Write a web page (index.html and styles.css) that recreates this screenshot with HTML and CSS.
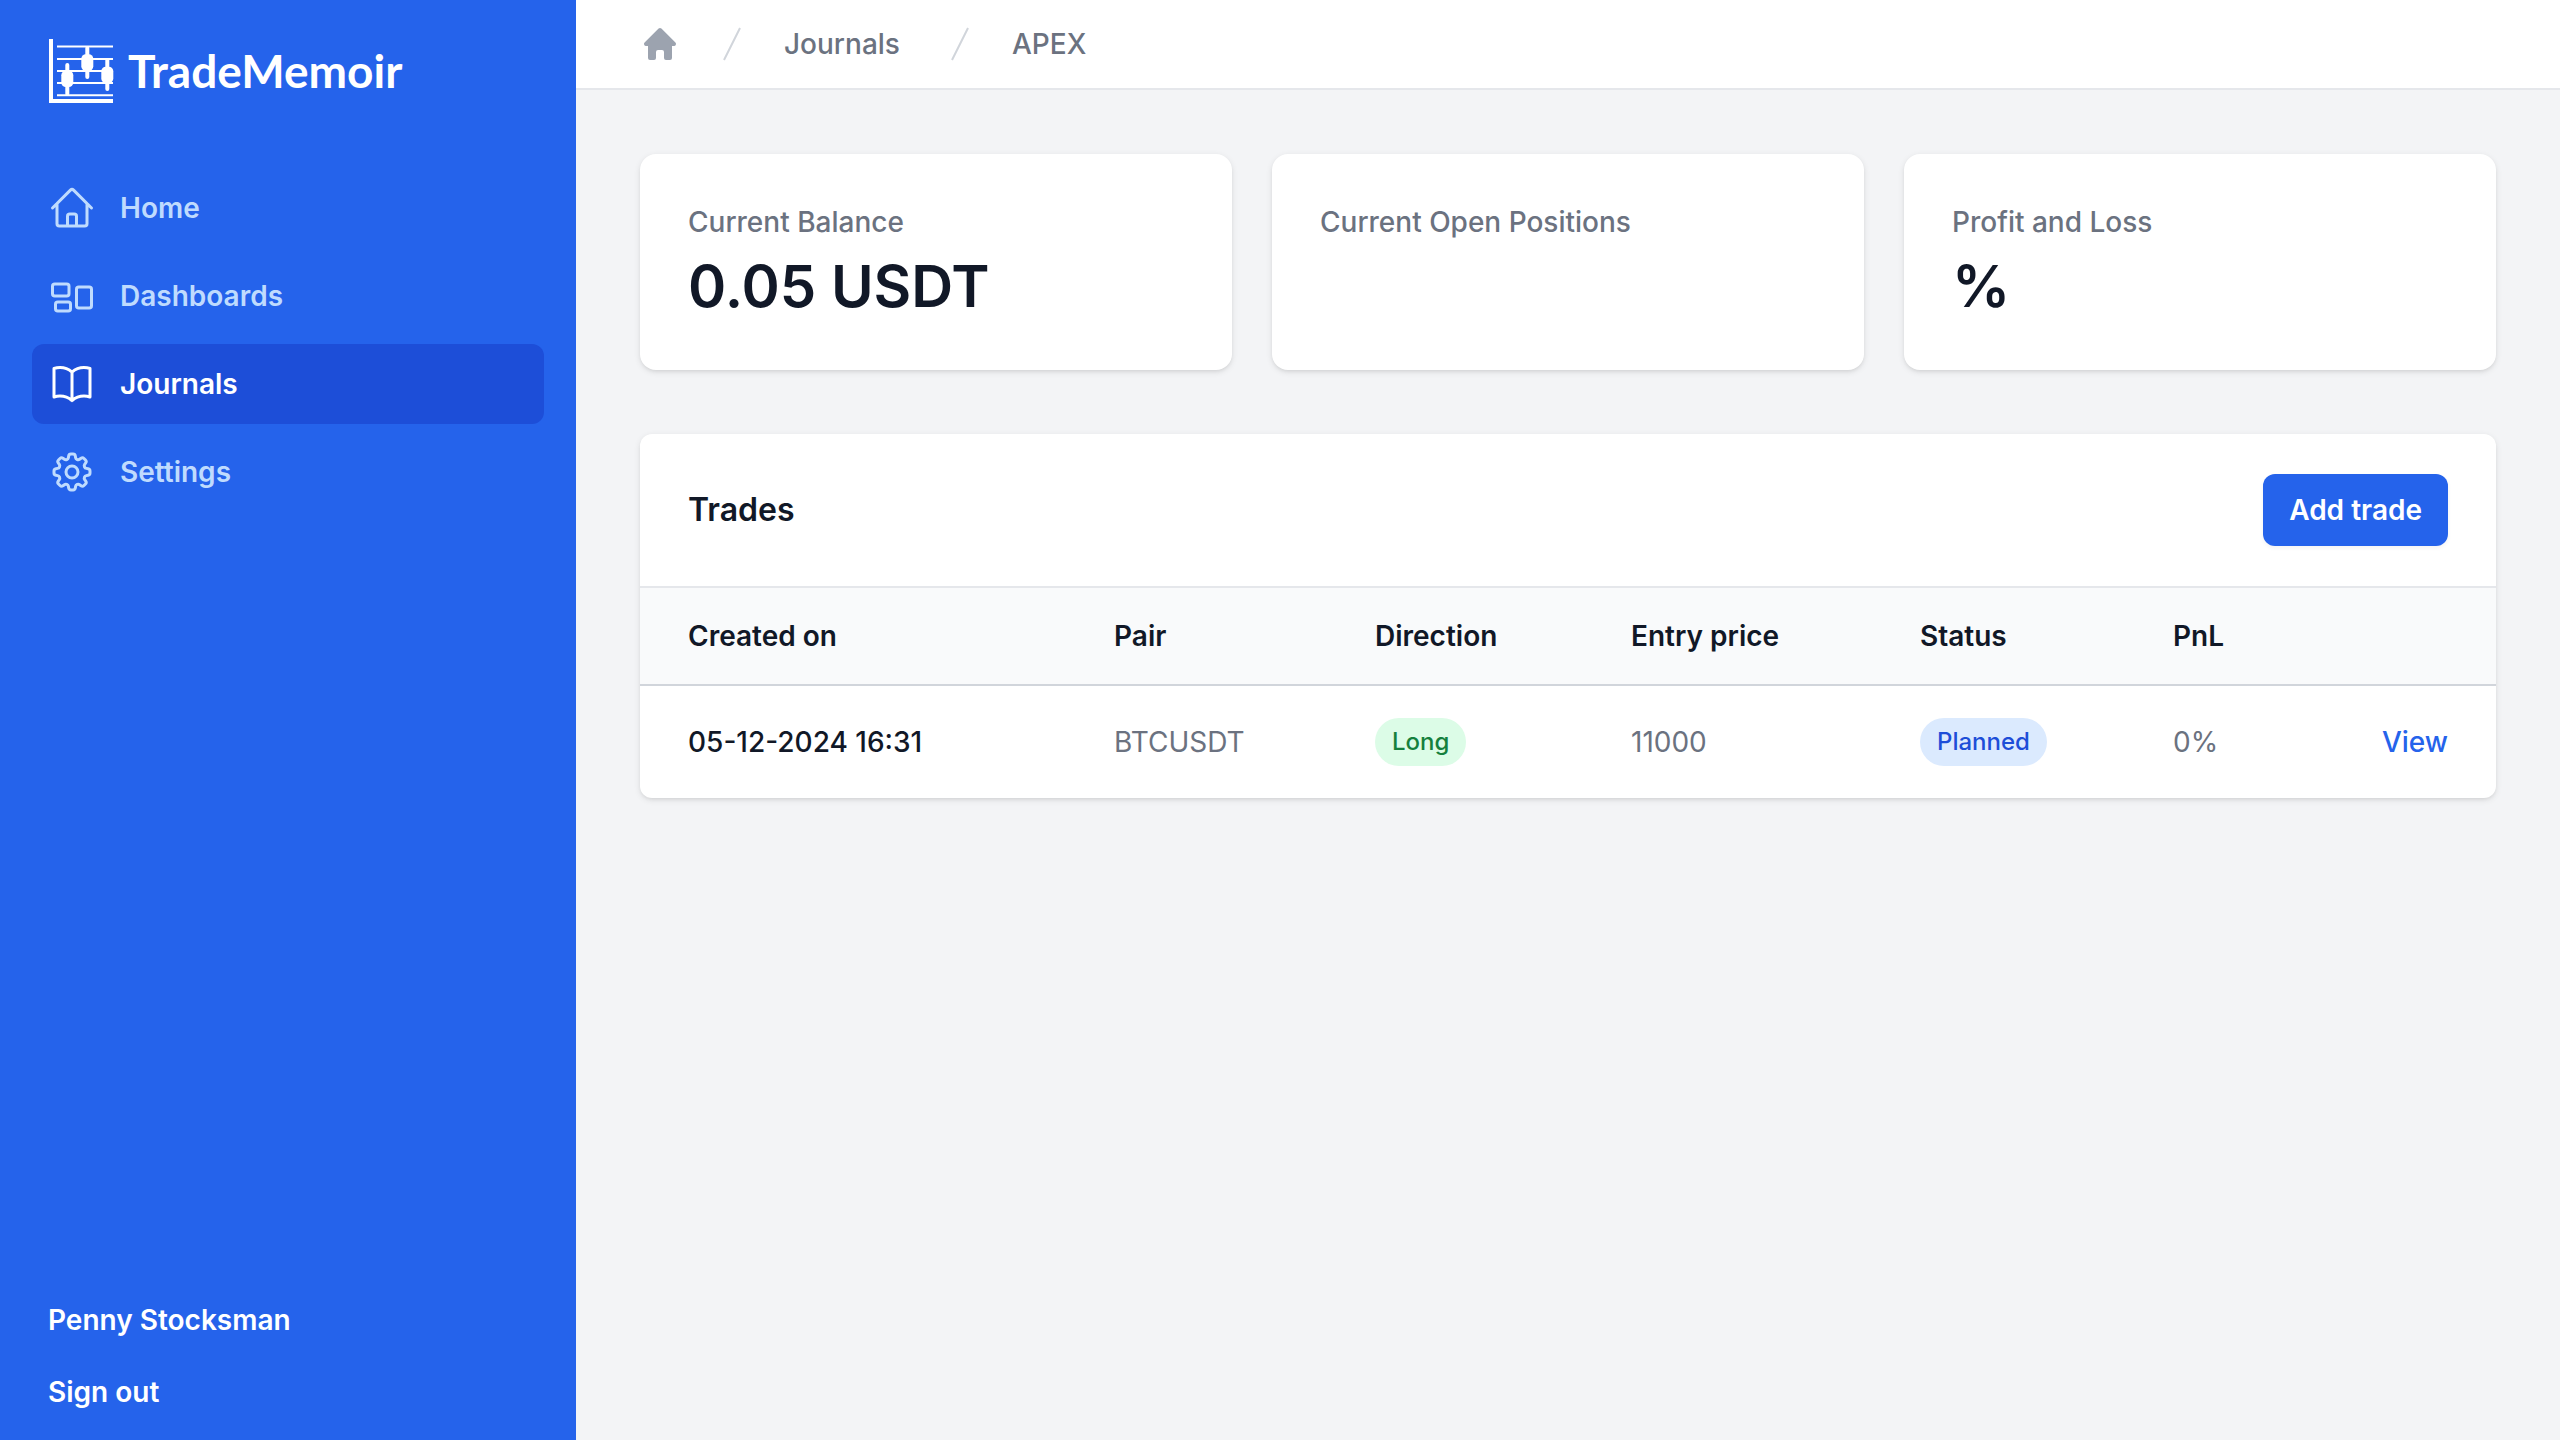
FILE: index.html
```html
<!DOCTYPE html>
<html lang="en">
<head>
<meta charset="utf-8">
<meta name="viewport" content="width=device-width, initial-scale=1">
<title>APEX - TradeMemoir</title>
<link rel="stylesheet" href="styles.css">
</head>
<body>
<div class="app">
  <aside class="sidebar">
    <a class="brand" href="#">
      <svg class="brand-mark" viewBox="0 0 66 66" fill="currentColor" aria-hidden="true">
        <path d="M1 1h4v60h60v4H1z"/>
        <path d="M9 7.5h56v2H9zM9 20h56v2H9zM9 32h56v2H9zM9 44h56v2H9zM9 56.3h56v2H9z"/>
        <rect x="17.3" y="25" width="4" height="33" rx="2"/>
        <rect x="13.3" y="32.7" width="12" height="16.4" rx="4.5"/>
        <rect x="37.3" y="8" width="4" height="33" rx="2"/>
        <rect x="33.3" y="16.3" width="12" height="16.4" rx="4.5"/>
        <rect x="57.3" y="20" width="4" height="33" rx="2"/>
        <rect x="53.3" y="28.7" width="12" height="16.4" rx="4.5"/>
      </svg>
      <span class="brand-name">TradeMemoir</span>
    </a>
    <nav class="nav" aria-label="Main">
      <a class="nav-link" href="#">
        <svg class="nav-icon" viewBox="0 0 24 24" aria-hidden="true"><path d="M2.25 12l8.954-8.955c.44-.439 1.152-.439 1.591 0L21.75 12M4.5 9.75v10.125c0 .621.504 1.125 1.125 1.125H9.75v-4.875c0-.621.504-1.125 1.125-1.125h2.25c.621 0 1.125.504 1.125 1.125V21h4.125c.621 0 1.125-.504 1.125-1.125V9.75M8.25 21h8.25"/></svg>
        Home
      </a>
      <a class="nav-link" href="#">
        <svg class="nav-icon" viewBox="0 0 24 24" aria-hidden="true"><path d="M2.25 7.125C2.25 6.504 2.754 6 3.375 6h6c.621 0 1.125.504 1.125 1.125v3.75c0 .621-.504 1.125-1.125 1.125h-6a1.125 1.125 0 01-1.125-1.125v-3.75zM14.25 8.625c0-.621.504-1.125 1.125-1.125h5.25c.621 0 1.125.504 1.125 1.125v8.25c0 .621-.504 1.125-1.125 1.125h-5.25a1.125 1.125 0 01-1.125-1.125v-8.25zM3.75 16.125c0-.621.504-1.125 1.125-1.125h5.25c.621 0 1.125.504 1.125 1.125v2.25c0 .621-.504 1.125-1.125 1.125h-5.25a1.125 1.125 0 01-1.125-1.125v-2.25z"/></svg>
        Dashboards
      </a>
      <a class="nav-link nav-link-active" href="#" aria-current="page">
        <svg class="nav-icon" viewBox="0 0 24 24" aria-hidden="true"><path d="M12 6.042A8.967 8.967 0 006 3.75c-1.052 0-2.062.18-3 .512v14.25A8.987 8.987 0 016 18c2.305 0 4.408.867 6 2.292m0-14.25a8.966 8.966 0 016-2.292c1.052 0 2.062.18 3 .512v14.25A8.987 8.987 0 0018 18a8.967 8.967 0 00-6 2.292m0-14.25v14.25"/></svg>
        Journals
      </a>
      <a class="nav-link" href="#">
        <svg class="nav-icon" viewBox="0 0 24 24" aria-hidden="true"><path d="M10.343 3.94c.09-.542.56-.94 1.11-.94h1.093c.55 0 1.02.398 1.11.94l.149.894c.07.424.384.764.78.93.398.164.855.142 1.205-.108l.737-.527a1.125 1.125 0 011.45.12l.773.774c.39.389.44 1.002.12 1.45l-.527.737c-.25.35-.272.806-.107 1.204.165.397.505.71.93.78l.893.15c.543.09.94.56.94 1.109v1.094c0 .55-.397 1.02-.94 1.11l-.893.149c-.425.07-.765.383-.93.78-.165.398-.143.854.107 1.204l.527.738c.32.447.269 1.06-.12 1.45l-.774.773a1.125 1.125 0 01-1.449.12l-.738-.527c-.35-.25-.806-.272-1.203-.107-.397.165-.71.505-.781.929l-.149.894c-.09.542-.56.94-1.11.94h-1.094c-.55 0-1.019-.398-1.11-.94l-.148-.894c-.071-.424-.384-.764-.781-.93-.398-.164-.854-.142-1.204.108l-.738.527c-.447.32-1.06.269-1.45-.12l-.773-.774a1.125 1.125 0 01-.12-1.45l.527-.737c.25-.35.273-.806.108-1.204-.165-.397-.505-.71-.93-.78l-.894-.15c-.542-.09-.94-.56-.94-1.109v-1.094c0-.55.398-1.02.94-1.11l.894-.149c.424-.07.765-.383.93-.78.165-.398.143-.854-.107-1.204l-.527-.738a1.125 1.125 0 01.12-1.45l.773-.773a1.125 1.125 0 011.45-.12l.737.527c.35.25.807.272 1.204.107.397-.165.71-.505.78-.929l.15-.894z"/><path d="M15 12a3 3 0 11-6 0 3 3 0 016 0z"/></svg>
        Settings
      </a>
    </nav>
    <div class="account">
      <a class="account-link" href="#">Penny Stocksman</a>
      <button class="account-link" type="button">Sign out</button>
    </div>
  </aside>

  <div class="page">
    <nav class="crumbs" aria-label="Breadcrumb">
      <a class="crumb-home" href="#" aria-label="Home">
        <svg class="crumb-icon" viewBox="0 0 20 20" fill="currentColor" aria-hidden="true"><path d="M9.293 2.293a1 1 0 011.414 0l7 7A1 1 0 0117 11h-1v6a1 1 0 01-1 1h-2a1 1 0 01-1-1v-3a1 1 0 00-1-1H9a1 1 0 00-1 1v3a1 1 0 01-1 1H5a1 1 0 01-1-1v-6H3a1 1 0 01-.707-1.707l7-7z"/></svg>
      </a>
      <svg class="crumb-icon crumb-slash" viewBox="0 0 20 20" fill="currentColor" aria-hidden="true"><path d="M5.555 17.776l8-16 .894.448-8 16-.894-.448z"/></svg>
      <a class="crumb" href="#">Journals</a>
      <svg class="crumb-icon crumb-slash" viewBox="0 0 20 20" fill="currentColor" aria-hidden="true"><path d="M5.555 17.776l8-16 .894.448-8 16-.894-.448z"/></svg>
      <a class="crumb" href="#" aria-current="page">APEX</a>
    </nav>

    <main class="content">
      <dl class="stats">
        <div class="stat">
          <dt class="stat-label">Current Balance</dt>
          <dd class="stat-value">0.05 USDT</dd>
        </div>
        <div class="stat">
          <dt class="stat-label">Current Open Positions</dt>
          <dd class="stat-value"></dd>
        </div>
        <div class="stat">
          <dt class="stat-label">Profit and Loss</dt>
          <dd class="stat-value">%</dd>
        </div>
      </dl>

      <section class="panel">
        <header class="panel-header">
          <h1 class="panel-title">Trades</h1>
          <button class="button" type="button">Add trade</button>
        </header>
        <table class="trades">
          <colgroup>
            <col class="col-date">
            <col class="col-pair">
            <col class="col-direction">
            <col class="col-price">
            <col class="col-status">
            <col class="col-pnl">
            <col class="col-action">
          </colgroup>
          <thead>
            <tr>
              <th scope="col">Created on</th>
              <th scope="col">Pair</th>
              <th scope="col">Direction</th>
              <th scope="col">Entry price</th>
              <th scope="col">Status</th>
              <th scope="col">PnL</th>
              <td></td>
            </tr>
          </thead>
          <tbody>
            <tr>
              <td class="date">05-12-2024 16:31</td>
              <td>BTCUSDT</td>
              <td><span class="badge badge-green">Long</span></td>
              <td>11000</td>
              <td><span class="badge badge-blue">Planned</span></td>
              <td>0%</td>
              <td class="action"><a class="view-link" href="#">View</a></td>
            </tr>
          </tbody>
        </table>
      </section>
    </main>
  </div>
</div>
</body>
</html>
```

FILE: styles.css
```css
*,
*::before,
*::after {
  box-sizing: border-box;
}

body {
  margin: 0;
  background: #f3f4f6;
  color: #111827;
  font-family: Inter, "Liberation Sans", sans-serif;
  font-size: 28px;
  line-height: 40px;
}

a {
  color: inherit;
  text-decoration: none;
}

button {
  border: 0;
  font: inherit;
  cursor: pointer;
}

svg {
  display: block;
  flex: none;
}

.app {
  display: flex;
  min-height: 100vh;
}

/* Sidebar */

.sidebar {
  flex: 0 0 576px;
  display: flex;
  flex-direction: column;
  padding: 38px 32px 24px;
  background: #2563eb;
  color: #fff;
}

.brand {
  display: flex;
  align-items: center;
  gap: 14px;
  padding: 0 16px;
}

.brand-mark {
  width: 66px;
  height: 66px;
}

.brand-name {
  font-family: Lato, "Noto Sans", sans-serif;
  font-size: 46px;
  font-weight: 700;
  line-height: 66px;
}

.nav {
  display: flex;
  flex-direction: column;
  gap: 8px;
  margin-top: 64px;
}

.nav-link {
  display: flex;
  align-items: center;
  gap: 24px;
  padding: 16px;
  border-radius: 12px;
  color: #bfdbfe;
  font-weight: 600;
  line-height: 48px;
}

.nav-link-active {
  background: #1d4ed8;
  color: #fff;
}

.nav-icon {
  width: 48px;
  height: 48px;
  fill: none;
  stroke: currentColor;
  stroke-width: 1.5;
  stroke-linecap: round;
  stroke-linejoin: round;
}

.account {
  display: flex;
  flex-direction: column;
  align-items: flex-start;
  gap: 24px;
  margin-top: auto;
  padding: 0 16px;
}

.account-link {
  padding: 0;
  background: none;
  color: #fff;
  font-weight: 600;
  line-height: 48px;
}

/* Page */

.page {
  flex: 1;
  min-width: 0;
}

.crumbs {
  display: flex;
  align-items: center;
  gap: 32px;
  padding: 24px 64px;
  border-bottom: 2px solid #e5e7eb;
  background: #fff;
  color: #6b7280;
  font-weight: 500;
}

.crumb {
  min-width: 124px;
}

.crumb-home {
  color: #9ca3af;
}

.crumb-icon {
  width: 40px;
  height: 40px;
}

.crumb-slash {
  color: #d1d5db;
}

.content {
  display: flex;
  flex-direction: column;
  gap: 64px;
  padding: 64px;
}

.stats {
  display: grid;
  grid-template-columns: repeat(3, 1fr);
  gap: 40px;
  margin: 0;
}

.stat,
.panel {
  background: #fff;
  box-shadow: 0 2px 6px rgba(0, 0, 0, 0.1), 0 2px 4px -2px rgba(0, 0, 0, 0.1);
}

.stat {
  padding: 48px;
  border-radius: 16px;
}

.stat-label {
  color: #6b7280;
  font-weight: 500;
}

.stat-value {
  min-height: 72px;
  margin: 8px 0 0;
  font-size: 58px;
  font-weight: 600;
  line-height: 72px;
}

.panel {
  overflow: hidden;
  border-radius: 12px;
}

.panel-header {
  display: flex;
  align-items: center;
  justify-content: space-between;
  padding: 40px 48px;
  border-bottom: 2px solid #e5e7eb;
}

.panel-title {
  margin: 0;
  font-size: 32px;
  font-weight: 600;
  line-height: 48px;
}

.button {
  padding: 16px 26px;
  border-radius: 12px;
  background: #2563eb;
  box-shadow: 0 2px 4px rgba(0, 0, 0, 0.05);
  color: #fff;
  font-weight: 600;
}

.trades {
  width: 100%;
  table-layout: fixed;
  border-collapse: separate;
  border-spacing: 0;
  text-align: left;
  white-space: nowrap;
}

/* Fixed layout shares any spare width between the columns in proportion */
.col-date {
  width: 450px;
}

.col-pair {
  width: 261px;
}

.col-direction {
  width: 256px;
}

.col-price {
  width: 289px;
}

.col-status {
  width: 253px;
}

.col-pnl {
  width: 164px;
}

.col-action {
  width: 183px;
}

.trades th,
.trades td {
  padding: 32px 24px;
}

.trades thead th,
.trades thead td {
  padding-top: 28px;
  padding-bottom: 28px;
  border-bottom: 2px solid #d1d5db;
  background: #f9fafb;
  font-weight: 600;
}

.trades th:first-child,
.trades td:first-child {
  padding-left: 48px;
}

.trades td:last-child {
  padding-right: 48px;
}

.trades tbody td {
  color: #6b7280;
  line-height: 48px;
}

.trades tbody .date {
  color: #111827;
  font-weight: 500;
}

.badge {
  display: block;
  width: fit-content;
  padding: 0 17px;
  border-radius: 24px;
  font-size: 24px;
  font-weight: 500;
}

.badge-green {
  background: #dcfce7;
  color: #15803d;
}

.badge-blue {
  background: #dbeafe;
  color: #1d4ed8;
}

.action {
  text-align: right;
}

.view-link {
  color: #2563eb;
  font-weight: 500;
}
```
